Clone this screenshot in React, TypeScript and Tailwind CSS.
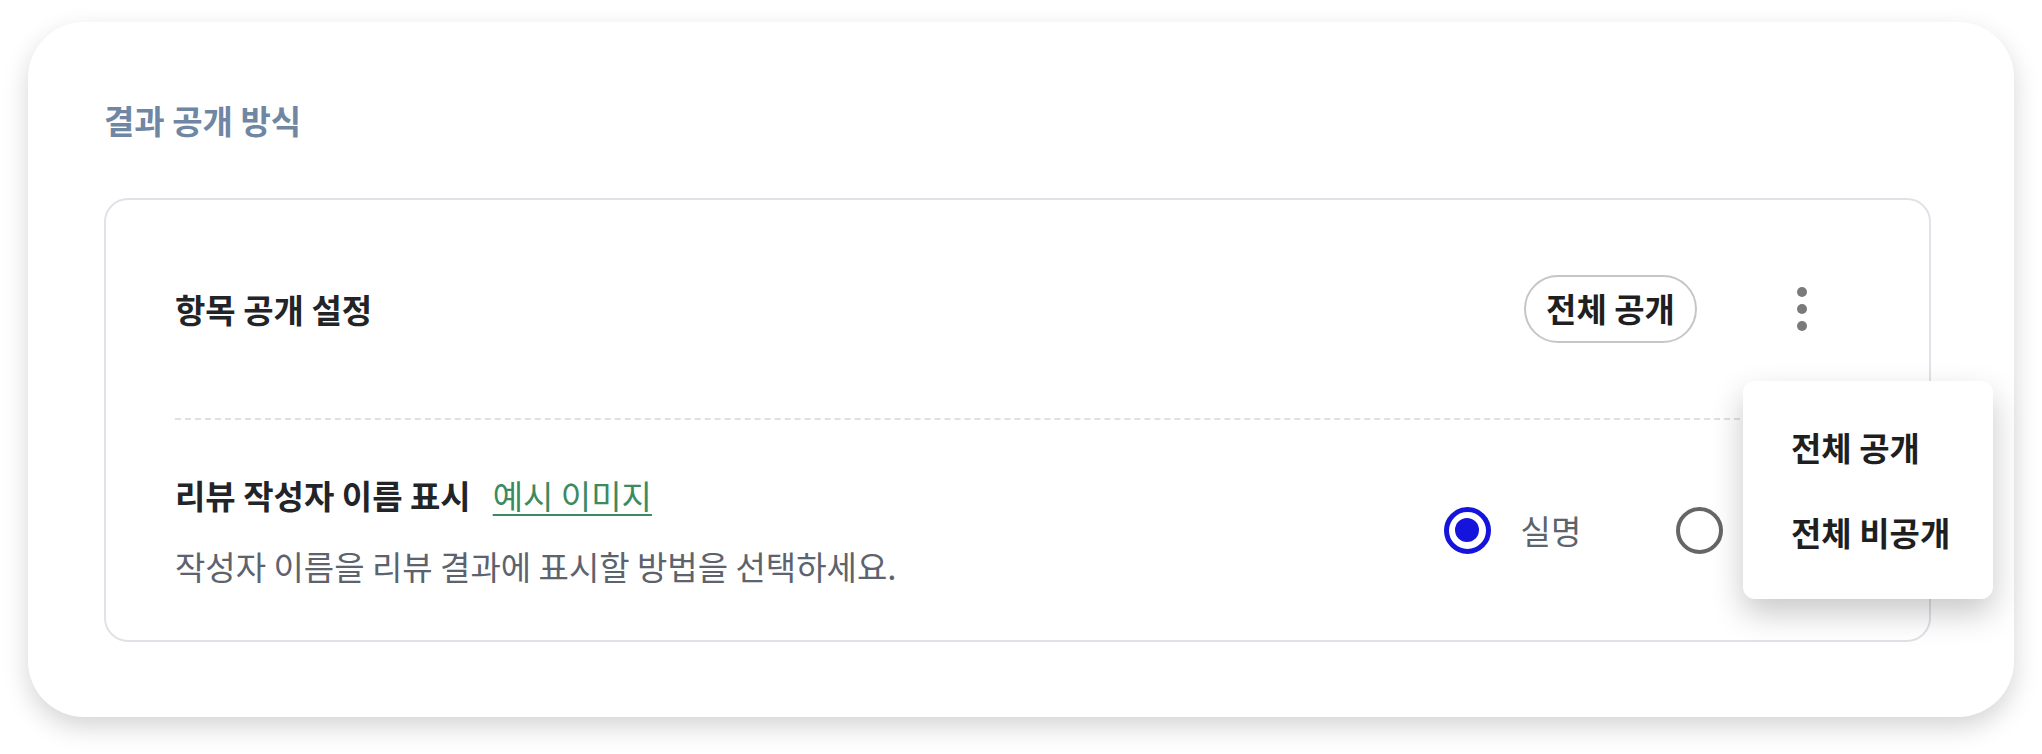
import { useState } from "react";

const font = "font-['Noto_Sans_CJK_KR','Noto_Sans',sans-serif]";

function Radio({ checked }: { checked: boolean }) {
  if (checked) {
    return (
      <span className="flex h-[47px] w-[47px] items-center justify-center rounded-full border-[5px] border-[#1414dc]">
        <span className="h-[24px] w-[24px] rounded-full bg-[#1414dc]" />
      </span>
    );
  }
  return <span className="block h-[47px] w-[47px] rounded-full border-4 border-[#666666]" />;
}

export default function App() {
  const [nameMode, setNameMode] = useState("real");

  return (
    <div className={`min-h-screen bg-white px-[28px] pt-[22px] ${font}`}>
      <div className="rounded-[56px] bg-white pb-[75px] pl-[76px] pr-[83px] pt-[76px] shadow-[0_10px_26px_rgba(0,0,0,0.17)]">
        <h1 className="text-[33px] font-bold leading-[44px] text-[#6f87a3]">결과 공개 방식</h1>

        <div className="mt-[56px] rounded-[24px] border-2 border-[#dfe2e7] px-[69px]">
          {/* Header */}
          <div className="flex h-[218px] items-center justify-between pr-[34px]">
            <h2 className="text-[33px] font-bold leading-[44px] text-[#222428]">항목 공개 설정</h2>
            <div className="flex items-center gap-[81px]">
              <span className="flex h-[68px] w-[173px] items-center justify-center rounded-full border-2 border-[#c6c6c6] text-[33px] font-bold text-[#1f1f1f]">
                전체 공개
              </span>
              <div className="relative">
                <button className="flex h-12 w-12 flex-col items-center justify-center gap-[7px]">
                  <span className="h-[10px] w-[10px] rounded-full bg-[#7a7a7a]" />
                  <span className="h-[10px] w-[10px] rounded-full bg-[#7a7a7a]" />
                  <span className="h-[10px] w-[10px] rounded-full bg-[#7a7a7a]" />
                </button>
                <div className="absolute left-[-35px] top-[96px] z-10 w-[250px] rounded-[12px] bg-white py-6 shadow-[0_14px_32px_rgba(0,0,0,0.22)]">
                  <div className="flex h-[85px] items-center pl-[48px] text-[33px] font-bold text-[#1f1f1f]">전체 공개</div>
                  <div className="flex h-[85px] items-center pl-[48px] text-[33px] font-bold text-[#1f1f1f]">전체 비공개</div>
                </div>
              </div>
            </div>
          </div>

          <div className="border-t-2 border-dashed border-[#dde0e5]" />

          {/* Author name row */}
          <div className="flex h-[220px] items-center justify-between pr-[46px]">
            <div className="flex flex-col gap-[27px]">
              <div className="flex items-center gap-[22px]">
                <span className="text-[33px] font-bold leading-[44px] text-[#222428]">리뷰 작성자 이름 표시</span>
                <span className="text-[33px] leading-[44px] text-[#3b8a60] underline decoration-2 underline-offset-[5px]">
                  예시 이미지
                </span>
              </div>
              <p className="text-[33px] leading-[44px] text-[#5c636e]">
                작성자 이름을 리뷰 결과에 표시할 방법을 선택하세요.
              </p>
            </div>

            <div className="flex items-center">
              <label className="flex cursor-pointer items-center gap-[30px]" onClick={() => setNameMode("real")}>
                <Radio checked={nameMode === "real"} />
                <span className="text-[33px] leading-[44px] text-[#5c636e]">실명</span>
              </label>
              <label className="ml-[95px] flex cursor-pointer items-center gap-[30px]" onClick={() => setNameMode("anon")}>
                <Radio checked={nameMode === "anon"} />
                <span className="text-[33px] leading-[44px] text-[#5c636e]">익명</span>
              </label>
            </div>
          </div>
        </div>
      </div>
    </div>
  );
}
